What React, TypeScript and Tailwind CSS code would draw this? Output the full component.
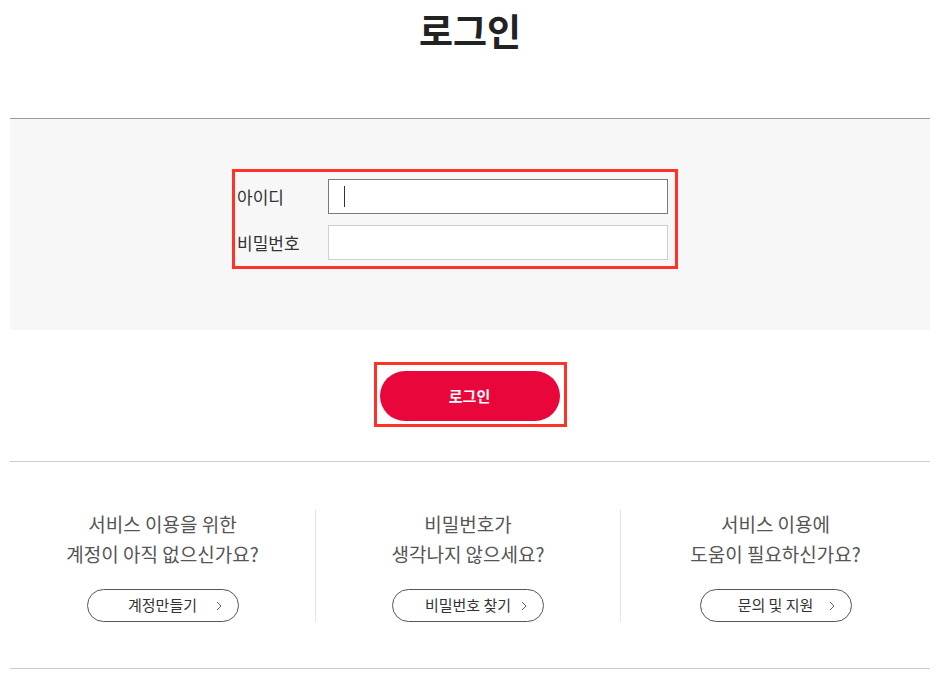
import { ReactNode } from 'react';

const font = { fontFamily: '"Noto Sans CJK KR", "Noto Sans", sans-serif' };

function Chevron() {
  return (
    <svg width="6" height="10" viewBox="0 0 6 10" className="absolute right-[16px] top-1/2 -translate-y-1/2">
      <path d="M1 1l4 4-4 4" fill="none" stroke="#666" strokeWidth="1" />
    </svg>
  );
}

function HelpColumn({ lines, label, first }: { lines: ReactNode[]; label: string; first?: boolean }) {
  return (
    <div className={`flex flex-col items-center ${first ? '' : 'border-l border-[#e6e6e6]'}`}>
      <div className="text-[19px] leading-[30px] text-[#555] text-center">
        {lines.map((l, i) => (
          <p key={i}>{l}</p>
        ))}
      </div>
      <button className="relative mt-[20px] w-[152px] h-[33px] rounded-full border border-[#555] bg-white text-[15px] text-[#333]">
        {label}
        <Chevron />
      </button>
    </div>
  );
}

export default function App() {
  return (
    <div className="min-h-screen bg-white px-[10px]" style={font}>
      <h1 className="text-center text-[37px] font-bold leading-[60px] text-[#222]">로그인</h1>

      <section className="mt-[58px] border-t border-[#9a9a9a] bg-[#f7f7f7] h-[212px] pt-[50px]">
        <div className="ml-[222px] w-[446px] h-[100px] border-[3px] border-[#ff3228] pt-[7px] pl-[2px] pr-[7px]">
          <div className="flex items-center">
            <label className="w-[91px] text-[17px] text-[#333]">아이디</label>
            <div className="relative w-[340px] h-[35px] border border-[#7a7a7a] bg-white">
              <span className="absolute left-[15px] top-[6px] h-[21px] w-px bg-[#333]" />
            </div>
          </div>
          <div className="flex items-center mt-[11px]">
            <label className="w-[91px] text-[17px] text-[#333]">비밀번호</label>
            <div className="w-[340px] h-[35px] border border-[#cfcfcf] bg-white" />
          </div>
        </div>
      </section>

      <div className="flex justify-center pt-[32px] pb-[34px] border-b border-[#cccccc]">
        <div className="border-[3px] border-[#ff3228] pt-[6px] pl-[3px] pr-[4px] pb-[3px]">
          <button className="w-[180px] h-[50px] rounded-full bg-[#e9063a] text-white text-[15px] font-bold">
            로그인
          </button>
        </div>
      </div>

      <div className="pt-[47px] pb-[46px] border-b border-[#cccccc]">
        <div className="grid grid-cols-[305px_305px_1fr]">
          <HelpColumn first lines={['서비스 이용을 위한', '계정이 아직 없으신가요?']} label="계정만들기" />
          <HelpColumn lines={['비밀번호가', '생각나지 않으세요?']} label="비밀번호 찾기" />
          <HelpColumn lines={['서비스 이용에', '도움이 필요하신가요?']} label="문의 및 지원" />
        </div>
      </div>
    </div>
  );
}
